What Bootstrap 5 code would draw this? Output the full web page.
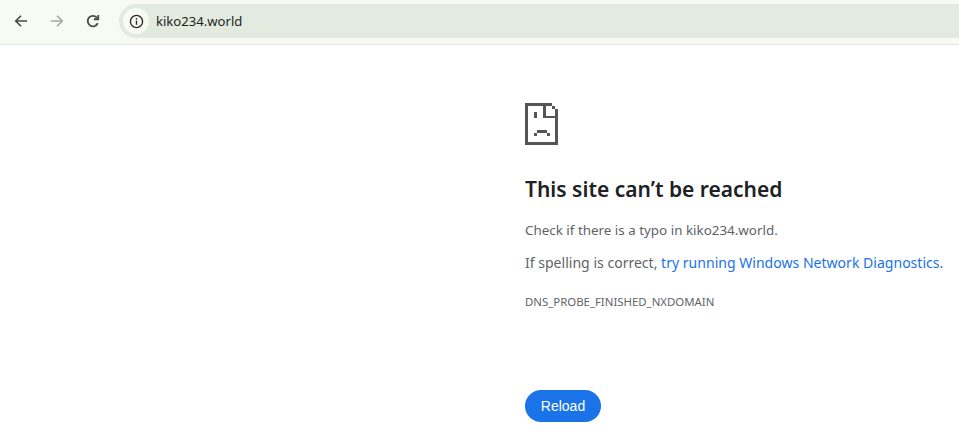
<!DOCTYPE html>
<html lang="en">
<head>
<meta charset="utf-8">
<title>kiko234.world</title>
<link href="https://cdn.jsdelivr.net/npm/bootstrap@5.3.0/dist/css/bootstrap.min.css" rel="stylesheet">
<style>
html,body{height:433px;overflow:hidden;background:#fff}
body{font-family:"Noto Sans","Open Sans",sans-serif}
.topbar{height:45px;background:#f7fbf1;border-bottom:1px solid #dfe6da;padding:4px 0 6px 6px}
.tool{width:30px;height:34px;margin-right:6px}
.omni{height:34px;background:#e3eadf;border-radius:17px 0 0 17px;margin-left:5px;padding-left:4px;font-size:13.1px;color:#1f1f1f}
.omni span{padding-top:2px}
.info{width:26px;height:26px;border-radius:50%;background:#f7fbf1;margin-right:7px}
.errbody{padding:58px 0 0 525px;font-size:13px;color:#5f6368}
.sadpage{display:block;width:33px;height:42px;margin-bottom:31px}
.errtitle{font-size:21px;line-height:26px;font-weight:600;color:#202124;margin:0 0 18px;white-space:nowrap}
.line1{font-size:13.4px;line-height:20px;margin:0 0 12px;white-space:nowrap}
.line2{font-size:14.05px;line-height:22px;margin:0 0 20px;white-space:nowrap}
.line2 a{color:#1a73e8;text-decoration:none}
.errcode{font-size:11.4px;line-height:16px;margin:0 0 80px;white-space:nowrap}
.reloadbtn{background:#1a73e8;color:#fff;border:0;border-radius:16px;width:76px;height:32px;padding:0;font-family:"Liberation Sans",sans-serif;font-size:14px}
</style>
</head>
<body>
<div class="topbar d-flex align-items-center">
  <div class="tool d-flex align-items-center justify-content-center">
    <svg width="14" height="14" viewBox="0 0 16 16" fill="none" stroke="#474c46" stroke-width="1.9"><path d="M15 8H2M8 2 2 8l6 6"/></svg>
  </div>
  <div class="tool d-flex align-items-center justify-content-center">
    <svg width="14" height="14" viewBox="0 0 16 16" fill="none" stroke="#a3a8a1" stroke-width="1.9"><path d="M1 8H14M8 2l6 6-6 6"/></svg>
  </div>
  <div class="tool d-flex align-items-center justify-content-center">
    <svg width="14" height="14" viewBox="0 0 16 16" fill="none" stroke="#474c46" stroke-width="2.100"><path d="M13.500 10.500A6 6 0 1 1 12.800 4.500"/><path d="M14 1v5H9"/></svg>
  </div>
  <div class="omni flex-grow-1 d-flex align-items-center">
    <div class="info d-flex align-items-center justify-content-center">
      <svg width="15" height="15" viewBox="0 0 16 16" fill="none" stroke="#2b2f2b" stroke-width="1.500"><circle cx="8" cy="8" r="6.500"/><path d="M8 7v4.500M8 4.200v1.600"/></svg>
    </div>
    <span>kiko234.world</span>
  </div>
</div>
<div class="errbody">
  <svg class="sadpage" viewBox="0 0 33 42" fill="#555" shape-rendering="crispEdges"><path d="M0 0h27v3H0zM0 0h3v42H0zM0 39h33v3H0zM30 6h3v36h-3zM27 3h3v3h-3zM18 3h3v12h-3zM18 13h15v2H18z"/><path d="M9 9h3v6H9zM12 27h10v3H12zM9 30h3v3H9zM22 30h3v3h-3z"/></svg>
  <h1 class="errtitle">This site can’t be reached</h1>
  <p class="line1">Check if there is a typo in kiko234.world.</p>
  <p class="line2">If spelling is correct, <a href="#">try running Windows Network Diagnostics</a>.</p>
  <div class="errcode">DNS_PROBE_FINISHED_NXDOMAIN</div>
  <button type="button" class="btn reloadbtn">Reload</button>
</div>
</body>
</html>
